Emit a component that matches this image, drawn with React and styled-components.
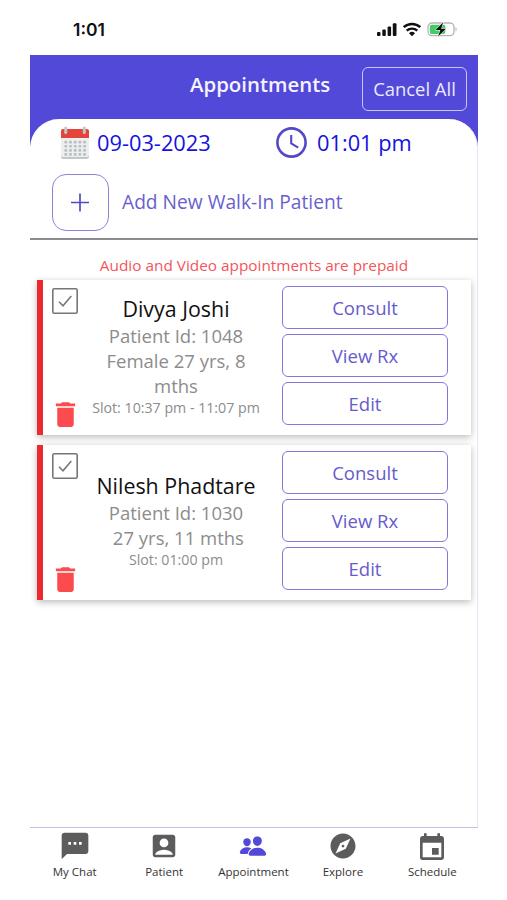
import styled, { createGlobalStyle } from 'styled-components';
import { MdSms, MdAccountBox, MdExplore, MdEvent, MdDelete } from 'react-icons/md';
import { IoPeople } from 'react-icons/io5';

const GlobalStyle = createGlobalStyle`
  * {
    box-sizing: border-box;
  }
  body {
    margin: 0;
    background: #fff;
    font-family: 'Open Sans', sans-serif;
  }
  button {
    font-family: inherit;
    padding: 0;
    margin: 0;
  }
`;

const Phone = styled.div`
  width: 448px;
  height: 900px;
  margin-left: 30px;
  display: flex;
  flex-direction: column;
  overflow: hidden;
`;

const StatusBar = styled.div`
  height: 55px;
  flex: none;
  display: flex;
  align-items: center;
  justify-content: space-between;
  padding: 4px 21px 0 43px;
  .time {
    font-family: Inter, sans-serif;
    font-size: 17.5px;
    font-weight: 600;
    color: #111;
  }
`;

const Header = styled.header`
  height: 91px;
  flex: none;
  display: grid;
  grid-template-columns: 160px auto 1fr;
  align-items: start;
  background: #5249d8;
  .title {
    grid-column: 2;
    margin: 15px 0 0;
    font-size: 20.4px;
    line-height: 28px;
    font-weight: 600;
    color: #f4f3ff;
  }
`;

const CancelButton = styled.button`
  justify-self: end;
  width: 105px;
  height: 44px;
  margin: 12px 11px 0 0;
  padding-bottom: 1px;
  border: 1.5px solid #c9c5f7;
  border-radius: 6px;
  background: transparent;
  color: #eceaff;
  font-size: 18.4px;
`;

const Content = styled.main`
  flex: none;
  height: 708px;
  margin-top: -27px;
  background: #fff;
  border-radius: 29px 29px 0 0;
  display: flex;
  flex-direction: column;
  box-shadow: inset -1px 0 #e6e4f6;
`;

const DateRow = styled.div`
  display: grid;
  grid-template-columns: 215px 1fr;
  height: 46px;
  padding-left: 31px;
`;

const DateField = styled.div`
  display: flex;
  align-items: center;
  gap: ${({ $gap }) => $gap}px;
  font-size: 21.8px;
  color: #1512e0;
  svg {
    flex: none;
  }
`;

const AddRow = styled.div`
  display: flex;
  align-items: center;
  gap: 13px;
  height: 75px;
  padding: 2px 0 0 22px;
  border-bottom: 2px solid #8b8b90;
  font-size: 19.2px;
  line-height: 26px;
  color: #6a5fcb;
  .label {
    padding-bottom: 2px;
  }
`;

const AddButton = styled.button`
  width: 57px;
  height: 57px;
  border: 1px solid #8e83dc;
  border-radius: 14px;
  background: #fff;
  color: #5249c8;
  display: flex;
  align-items: center;
  justify-content: center;
`;

const Notice = styled.p`
  margin: 15px 0 4px;
  line-height: 21px;
  text-align: center;
  font-size: 15.35px;
  color: #f4555b;
`;

const CardList = styled.div`
  display: flex;
  flex-direction: column;
  gap: 10px;
  padding: 0 7px;
`;

const Card = styled.article`
  height: 155px;
  display: grid;
  grid-template-columns: 44px 178px 166px;
  border-left: 6px solid #eb2a2d;
  background: #fff;
  box-shadow: 0 2px 7px rgba(0, 0, 0, 0.28);
`;

const CardTools = styled.div`
  display: flex;
  flex-direction: column;
  align-items: center;
  justify-content: space-between;
  padding: 8px 0 4px;
`;

const Info = styled.div`
  display: flex;
  flex-direction: column;
  align-items: center;
  justify-content: center;
  text-align: center;
  padding-bottom: 3px;
  .name {
    margin: 0;
    font-size: 21.4px;
    line-height: 28px;
    font-weight: 400;
    color: #111;
  }
  .detail {
    margin: 0;
    padding: 0 14px;
    font-size: 18.5px;
    line-height: 25px;
    color: #8c8c8c;
  }
  .slot {
    margin: 0;
    font-size: 14.2px;
    line-height: 20px;
    white-space: nowrap;
    color: #8c8c8c;
  }
`;

const Actions = styled.div`
  display: flex;
  flex-direction: column;
  gap: 5px;
  width: 166px;
  padding-top: 6px;
  margin-left: 17px;
`;

const ActionButton = styled.button`
  height: 43px;
  border: 1.5px solid #8177dc;
  border-radius: 6px;
  background: #fff;
  color: #675bcb;
  font-size: 18.5px;
`;

const TabBar = styled.nav`
  flex: 1;
  display: grid;
  grid-template-columns: repeat(5, 1fr);
  padding-right: 1px;
  border-top: 1px solid #c4c0e8;
`;

const Tab = styled.a`
  display: flex;
  flex-direction: column;
  align-items: center;
  font-size: 11.5px;
  color: #333;
  .icon {
    height: 35px;
    display: flex;
    align-items: center;
    padding-top: ${({ $drop }) => $drop || 0}px;
    color: ${({ $active }) => ($active ? '#5249d8' : '#5c5c5c')};
  }
  .label {
    line-height: 17px;
  }
`;

function StatusIcons() {
  return (
    <svg width='81' height='16' viewBox='0 0 81 16'>
      <g fill='#111'>
        <rect x='1' y='10' width='3.5' height='4' rx='1' />
        <rect x='6.3' y='7.5' width='3.5' height='6.5' rx='1' />
        <rect x='11.6' y='4.5' width='3.5' height='9.5' rx='1' />
        <rect x='16.8' y='1.2' width='3.7' height='12.8' rx='1' />
      </g>
      <g fill='none' stroke='#111' strokeWidth='2.4'>
        <path d='M27.7 5.2a12.2 12.2 0 0 1 16.6 0' />
        <path d='M30.7 8.7a7.8 7.8 0 0 1 10.6 0' />
      </g>
      <path d='M33 11.2a4.4 4.4 0 0 1 6 0l-3 3z' fill='#111' />
      <rect x='52' y='1' width='26' height='12.6' rx='4' fill='#fff' stroke='#b5b5b5' strokeWidth='1.3' />
      <path d='M79.5 5.2v4.2c1.6-.6 1.6-3.6 0-4.2z' fill='#b5b5b5' />
      <rect x='53.8' y='2.7' width='15.5' height='9.2' rx='2' fill='#42cc68' />
      <path d='M67.2.2 59.6 8h4.7l-2.2 6.4L70 6.7h-4.8z' fill='#111' stroke='#fff' strokeWidth='1' paintOrder='stroke' />
    </svg>
  );
}

function CalendarIcon() {
  const dots = [];
  for (let row = 0; row < 4; row += 1) {
    for (let col = 0; col < 5; col += 1) {
      dots.push(<rect key={`${row}-${col}`} x={3.4 + col * 4.7} y={14.8 + row * 4.1} width='2.8' height='2.7' rx='.8' />);
    }
  }
  return (
    <svg width='28' height='33' viewBox='0 0 28 33'>
      <rect x='0' y='4' width='28' height='29' rx='2.5' fill='#c3c7c8' />
      <rect x='0' y='4' width='28' height='27' rx='2' fill='#eceff0' />
      <path d='M2 3h24a2 2 0 0 1 2 2v7H0V5a2 2 0 0 1 2-2z' fill='#e5443c' />
      <rect x='3.2' y='.5' width='3' height='7.5' rx='1.5' fill='#c3c7c8' />
      <rect x='21.8' y='.5' width='3' height='7.5' rx='1.5' fill='#c3c7c8' />
      <g fill='#b9bec1'>{dots}</g>
    </svg>
  );
}

function ClockIcon() {
  return (
    <svg width='31' height='31' viewBox='0 0 31 31' fill='none' stroke='#5249c8'>
      <circle cx='15.5' cy='15.5' r='14.1' strokeWidth='2.6' />
      <path d='M15.2 8v8.4l7 4.2' strokeWidth='2.1' />
    </svg>
  );
}

function PlusIcon() {
  return (
    <svg width='19' height='19' viewBox='0 0 19 19' stroke='currentColor' strokeWidth='1.7'>
      <path d='M0 9.5h18M9 .5v18' />
    </svg>
  );
}

function CheckIcon() {
  return (
    <svg width='26' height='26' viewBox='0 0 26 26' fill='none' stroke='#777'>
      <rect x='.8' y='.8' width='24.4' height='24.4' rx='1.5' strokeWidth='1.6' />
      <path d='M7 13.8l4 4L19.3 8' strokeWidth='1.6' />
    </svg>
  );
}

function PatientCard({ patient }) {
  return (
    <Card>
      <CardTools>
        <CheckIcon />
        <MdDelete size={33} color='#fb4b4f' />
      </CardTools>
      <Info>
        <h2 className='name'>{patient.name}</h2>
        <p className='detail'>Patient Id: {patient.id}</p>
        <p className='detail'>{patient.age}</p>
        <p className='slot'>Slot: {patient.slot}</p>
      </Info>
      <Actions>
        <ActionButton>Consult</ActionButton>
        <ActionButton>View Rx</ActionButton>
        <ActionButton>Edit</ActionButton>
      </Actions>
    </Card>
  );
}

const patients = [
  { id: 1048, name: 'Divya Joshi', age: 'Female 27 yrs, 8 mths', slot: '10:37 pm - 11:07 pm' },
  { id: 1030, name: 'Nilesh Phadtare', age: '\u00a027 yrs, 11 mths', slot: '01:00 pm' },
];

const tabs = [
  { label: 'My Chat', Icon: MdSms, size: 32 },
  { label: 'Patient', Icon: MdAccountBox, size: 30 },
  { label: 'Appointment', Icon: IoPeople, size: 28, active: true },
  { label: 'Explore', Icon: MdExplore, size: 30 },
  { label: 'Schedule', Icon: MdEvent, size: 32, drop: 4 },
];

export default function App() {
  return (
    <Phone>
      <GlobalStyle />
      <StatusBar>
        <span className='time'>1:01</span>
        <StatusIcons />
      </StatusBar>
      <Header>
        <h1 className='title'>Appointments</h1>
        <CancelButton>Cancel All</CancelButton>
      </Header>
      <Content>
        <DateRow>
          <DateField $gap={8}>
            <CalendarIcon />
            <span>09-03-2023</span>
          </DateField>
          <DateField $gap={10}>
            <ClockIcon />
            <span>01:01 pm</span>
          </DateField>
        </DateRow>
        <AddRow>
          <AddButton><PlusIcon /></AddButton>
          <span className='label'>Add New Walk-In Patient</span>
        </AddRow>
        <Notice>Audio and Video appointments are prepaid</Notice>
        <CardList>
          {patients.map((patient) => (
            <PatientCard key={patient.id} patient={patient} />
          ))}
        </CardList>
      </Content>
      <TabBar>
        {tabs.map(({ label, Icon, size, active, drop }) => (
          <Tab key={label} $active={active} $drop={drop}>
            <span className='icon'><Icon size={size} /></span>
            <span className='label'>{label}</span>
          </Tab>
        ))}
      </TabBar>
    </Phone>
  );
}
